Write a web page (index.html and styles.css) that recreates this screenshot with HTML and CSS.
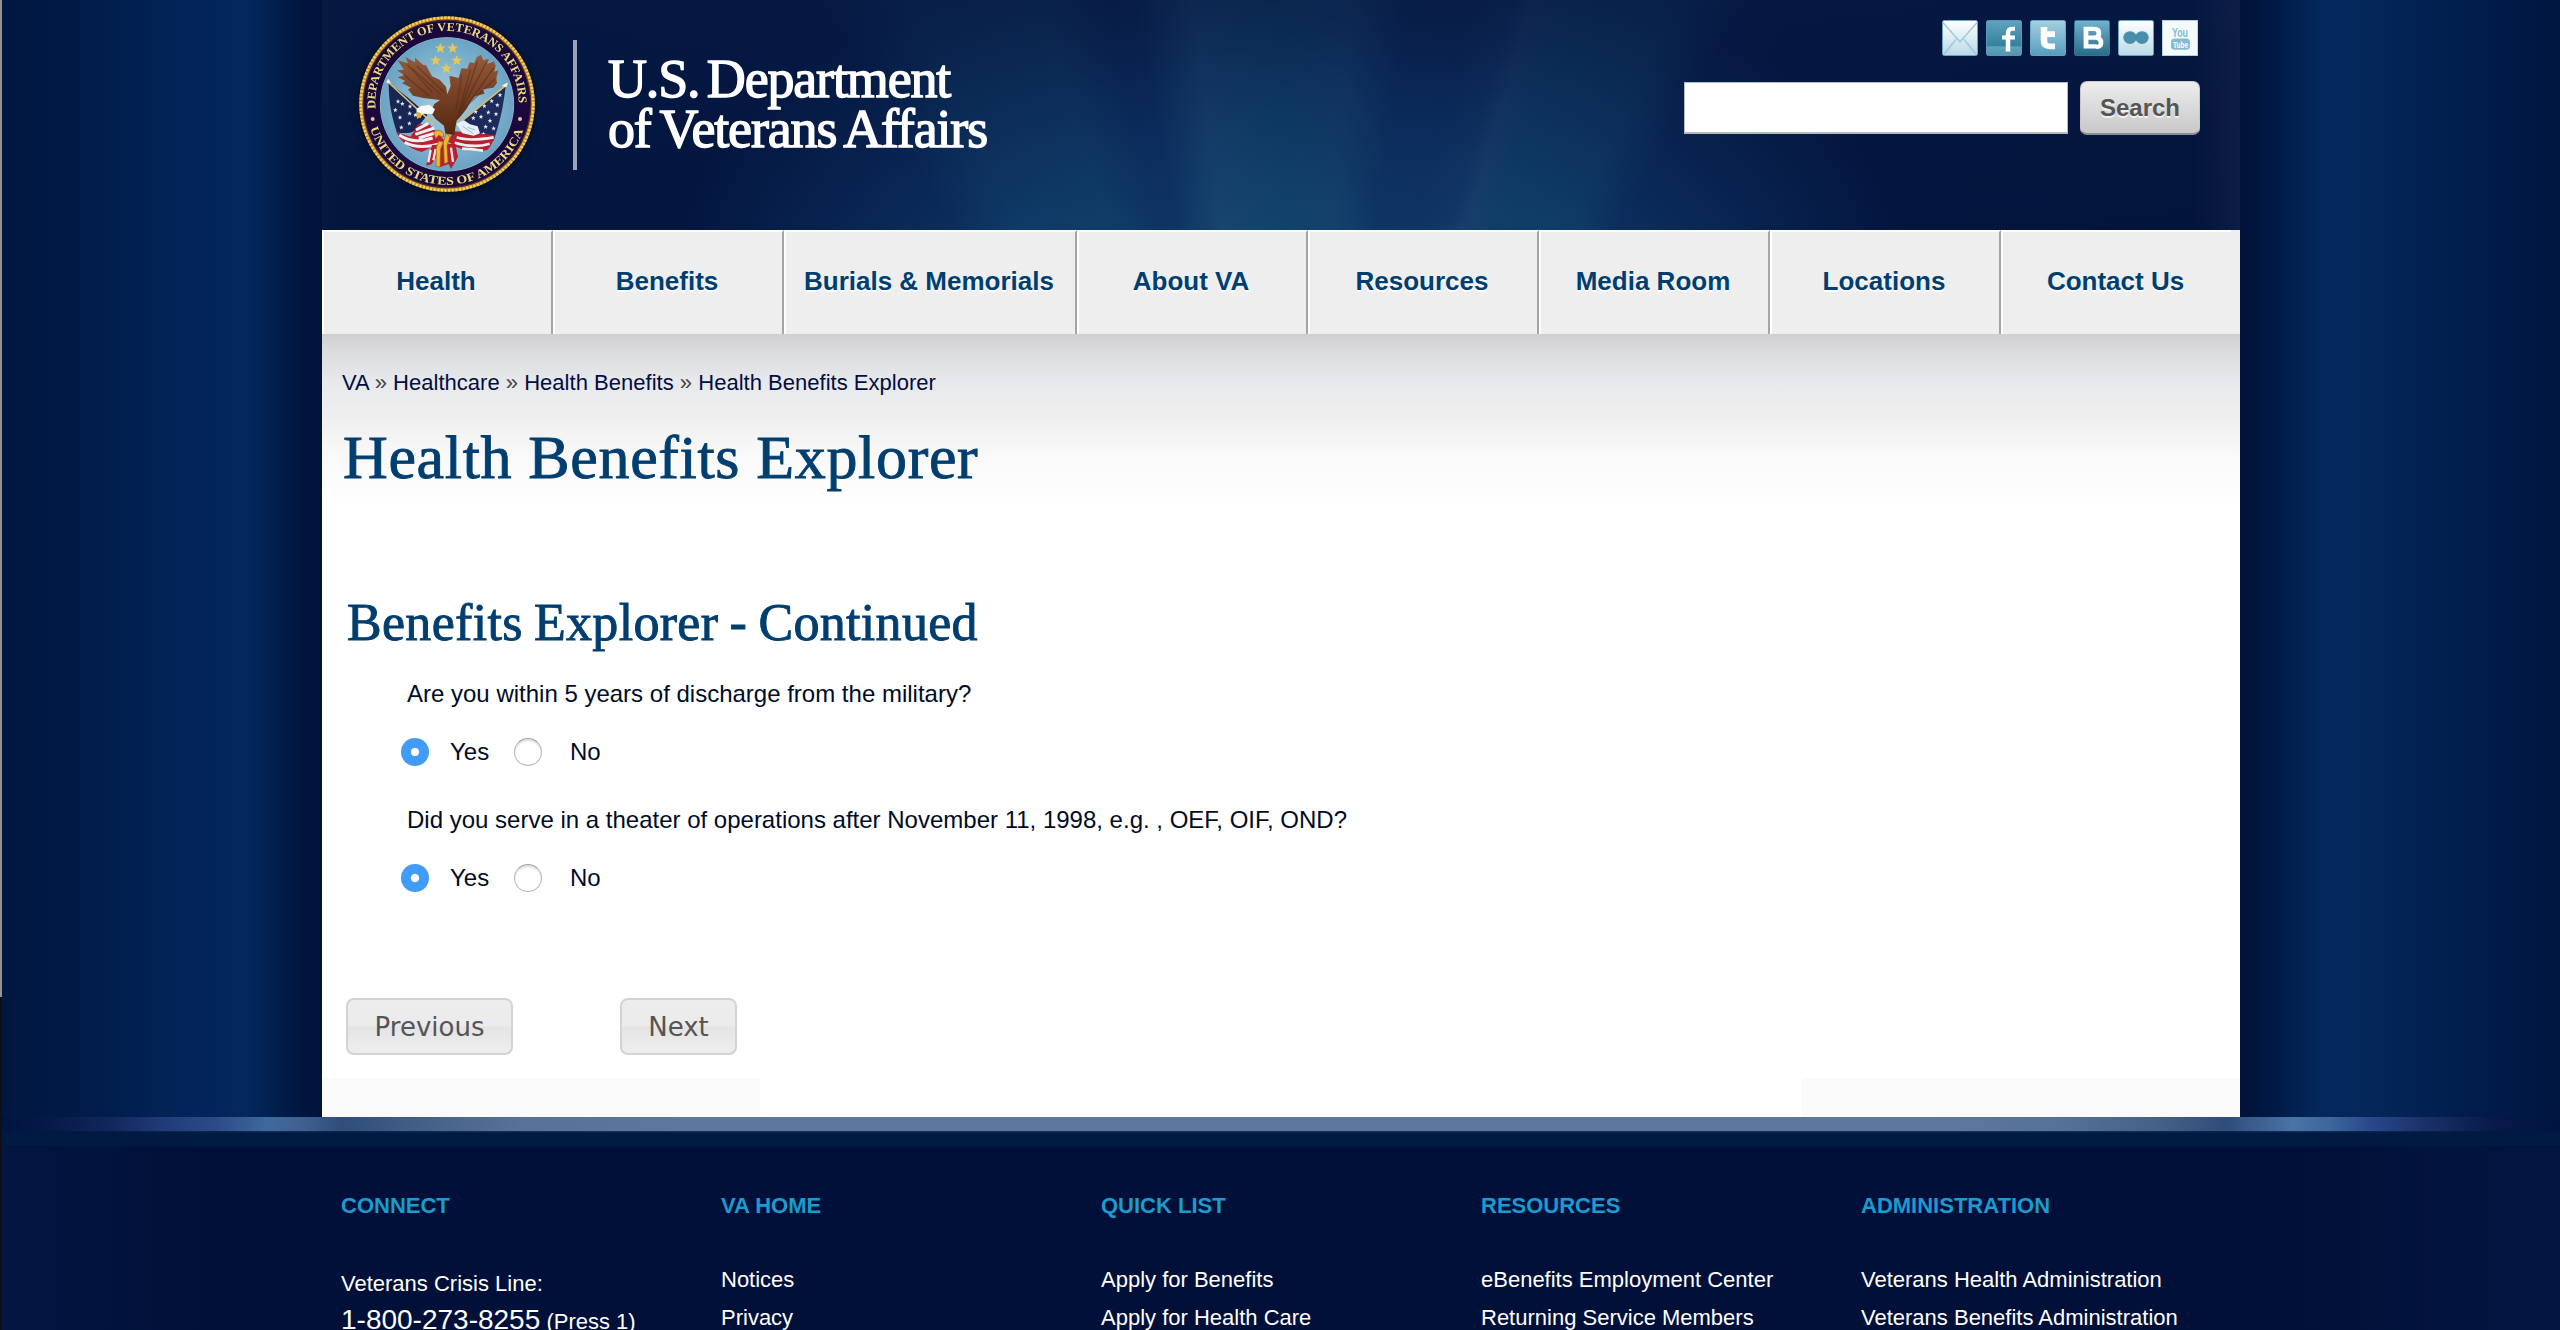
FILE: index.html
```html
<!DOCTYPE html>
<html lang="en">
<head>
<meta charset="utf-8">
<title>Health Benefits Explorer</title>
<link rel="stylesheet" href="styles.css">
</head>
<body>
<div class="stage">
<div class="page">
  <header class="banner">
    <svg class="seal" viewBox="0 0 660 660" aria-label="Department of Veterans Affairs seal">
      <defs>
        <path id="arc-top" d="M107 328 A215 215 0 1 1 535 328"/>
        <path id="arc-bottom" d="M88 375 A241 241 0 0 0 554 375"/>
        <radialGradient id="sky"><stop offset="0" stop-color="#a9cfe0"/><stop offset="1" stop-color="#6ba3c4"/></radialGradient>
        <linearGradient id="feather" x1="0" y1="0" x2="0" y2="1"><stop offset="0" stop-color="#965b3b"/><stop offset="1" stop-color="#56260f"/></linearGradient>
        <path id="star" d="M0-17 4.5-5.5 16.5-5.5 7 2 10.5 14 0 7-10.5 14-7 2-16.5-5.5-4.5-5.5Z"/>
        <path id="starlet" d="M0-7 2-2 7-2 3 1 4 7 0 3-4 7-3 1-7-2-2-2Z" fill="#e5edf8"/>
      </defs>
      <circle cx="321" cy="312" r="258" fill="#1b093d" stroke="#c28826" stroke-width="11"/>
      <circle cx="321" cy="312" r="259" fill="none" stroke="#f2d264" stroke-width="8" stroke-dasharray="7 4"/>
      <circle cx="321" cy="312" r="251" fill="none" stroke="#70401b" stroke-width="2"/>
      <circle cx="321" cy="313" r="200" fill="url(#sky)" stroke="#86b5cd" stroke-width="3"/>
      <text class="seal-text"><textPath href="#arc-top" startOffset="2" textLength="696" lengthAdjust="spacingAndGlyphs">DEPARTMENT OF VETERANS AFFAIRS</textPath></text>
      <text class="seal-text"><textPath href="#arc-bottom" startOffset="10" textLength="606" lengthAdjust="spacingAndGlyphs">UNITED STATES OF AMERICA</textPath></text>
      <circle cx="98" cy="357" r="6" fill="#e3c49a"/><circle cx="540" cy="357" r="6" fill="#e3c49a"/>
      <g fill="#e6c757">
        <use href="#star" x="301" y="145"/><use href="#star" x="338" y="145"/><use href="#star" x="287" y="182"/><use href="#star" x="350" y="182"/><use href="#star" x="319" y="206"/>
      </g>
      <path d="M146 250C146 315 158 360 171 398C196 398 214 404 229 386L262 345Q205 290 146 250Z" fill="#192654"/>
      <path d="M497 258C490 320 480 365 461 422L365 392L370 358Z" fill="#1e2a5c"/>
      <g>
        <use href="#starlet" x="174" y="304"/><use href="#starlet" x="166" y="330"/><use href="#starlet" x="187" y="311"/><use href="#starlet" x="210" y="319"/><use href="#starlet" x="209" y="340"/><use href="#starlet" x="180" y="352"/><use href="#starlet" x="208" y="370"/><use href="#starlet" x="184" y="382"/><use href="#starlet" x="226" y="345"/>
        <use href="#starlet" x="480" y="285"/><use href="#starlet" x="455" y="303"/><use href="#starlet" x="472" y="315"/><use href="#starlet" x="433" y="318"/><use href="#starlet" x="445" y="337"/><use href="#starlet" x="468" y="342"/><use href="#starlet" x="407" y="335"/><use href="#starlet" x="423" y="350"/><use href="#starlet" x="450" y="362"/><use href="#starlet" x="400" y="354"/><use href="#starlet" x="437" y="380"/><use href="#starlet" x="461" y="385"/><use href="#starlet" x="430" y="402"/>
      </g>
      <path d="M169 397C180 421 205 446 245 456L315 423L268 373L234 373Q222 396 211 410Z" fill="#bb2030"/>
      <path d="M178 405Q218 434 278 414M194 427Q237 450 303 430M228 390L265 370M226 403L283 384M236 414L296 396" fill="none" stroke="#f4edf0" stroke-width="9"/>
      <path d="M344 394L465 405Q459 432 442 450Q399 460 351 442L322 423Z" fill="#b81f2f"/>
      <path d="M350 412Q386 425 461 412M344 428Q401 446 449 431M366 446Q397 447 429 452" fill="none" stroke="#f4edf0" stroke-width="8"/>
      <path d="M276 435L258 497L275 493L289 471L299 502L326 492L333 507L354 471L346 431Z" fill="#b81f2f"/>
      <path d="M272 450L265 487M287 447L280 481M333 443L339 486" stroke="#f2e7ed" stroke-width="7"/>
      <path d="M144 246L279 371M497 257L353 373" fill="none" stroke="#d9bd64" stroke-width="5"/>
      <path d="M140 247L145 238L151 249ZM499 260L502 249L487 257Z" fill="#fff" stroke="#f7e8c4" stroke-width="3"/>
      <path d="M173 181L204 190 196 171 225 187 225 173 250 195 258 196 276 229 299 239 318 260 322 283 332 258 328 227 356 234 364 205 382 206 389 187 403 189 410 172 423 164 430 181 447 176 442 192 462 184 467 199 462 215 475 211 469 235 471 249 460 263 428 268 434 281 405 289 391 306 380 326 363 348 350 362 346 384 343 405 316 401 312 377 286 356 272 337 283 312 300 300 250 294 219 287 204 268 213 263 186 249 196 243 173 232 193 226 171 211 192 209Z" fill="url(#feather)"/>
      <path d="M202 193L278 278M216 205L301 283M190 223L267 287M230 198L314 278M365 224L348 333M392 208L355 340M412 185L355 352M439 187L351 355M461 204L362 344M464 238L374 324" fill="none" stroke="#4e2413" stroke-width="4" opacity=".45"/>
      <path d="M229 347L230 326 244 318 269 314 285 328 278 342 248 341 241 354Z" fill="#f8f8fb"/>
      <path d="M230 334L245 342 243 351 231 357Z" fill="#e3ad27"/>
      <path d="M349 371L372 361 390 373 413 379 420 400 401 407 367 400Z" fill="#e7eff8"/>
      <path d="M383 382L405 390M368 379L400 401" stroke="#9fb9d2" stroke-width="3"/>
      <path d="M281 397Q300 383 311 401L310 411 296 406 287 416ZM297 423L289 441 288 499 300 501 302 447 310 426ZM310 426L313 491 324 487 321 437 330 412 319 400Z" fill="#edb631" stroke="#945d17" stroke-width="2"/>
    </svg>
    <div class="wordmark"><span class="first">U.S. Department</span><span class="second">of Veterans Affairs</span></div>
    <div class="tools">
      <div class="social">
        <svg viewBox="0 0 36 36"><use href="#icon-mail"/></svg>
        <svg viewBox="0 0 36 36"><use href="#icon-facebook"/></svg>
        <svg viewBox="0 0 36 36"><use href="#icon-twitter"/></svg>
        <svg viewBox="0 0 36 36"><use href="#icon-blog"/></svg>
        <svg viewBox="0 0 36 36"><use href="#icon-flickr"/></svg>
        <svg viewBox="0 0 36 36"><use href="#icon-youtube"/></svg>
      </div>
      <form class="search"><input type="text" aria-label="Search"><button type="button">Search</button></form>
    </div>
  </header>
  <nav class="menu">
    <a>Health</a><a>Benefits</a><a class="wide">Burials &amp; Memorials</a><a>About VA</a><a>Resources</a><a>Media Room</a><a>Locations</a><a>Contact Us</a>
  </nav>
  <main class="content">
    <p class="crumbs"><a>VA</a> » <a>Healthcare</a> » <a>Health Benefits</a> » <a>Health Benefits Explorer</a></p>
    <h1>Health Benefits Explorer</h1>
    <h2>Benefits Explorer - Continued</h2>
    <section class="question">
      <p>Are you within 5 years of discharge from the military?</p>
      <div class="answers"><i class="radio on"></i><span class="yes">Yes</span><i class="radio"></i><span>No</span></div>
    </section>
    <section class="question">
      <p>Did you serve in a theater of operations after November 11, 1998, e.g. , OEF, OIF, OND?</p>
      <div class="answers"><i class="radio on"></i><span class="yes">Yes</span><i class="radio"></i><span>No</span></div>
    </section>
    <div class="actions"><button type="button">Previous</button><button type="button">Next</button></div>
    <div class="base"></div>
  </main>
</div>
<footer class="footer">
  <div class="rule"></div>
  <div class="columns">
    <div><h3>CONNECT</h3><p class="crisis">Veterans Crisis Line:<br><b>1-800-273-8255</b> (Press 1)</p></div>
    <div><h3>VA HOME</h3><ul><li>Notices</li><li>Privacy</li></ul></div>
    <div><h3>QUICK LIST</h3><ul><li>Apply for Benefits</li><li>Apply for Health Care</li></ul></div>
    <div><h3>RESOURCES</h3><ul><li>eBenefits Employment Center</li><li>Returning Service Members</li></ul></div>
    <div><h3>ADMINISTRATION</h3><ul><li>Veterans Health Administration</li><li>Veterans Benefits Administration</li></ul></div>
  </div>
</footer>
</div>
<svg class="sprite" width="0" height="0">
  <defs>
    <linearGradient id="pale" x1="0" y1="0" x2="0" y2="1"><stop offset="0" stop-color="#fff"/><stop offset="1" stop-color="#b9d9e6"/></linearGradient>
    <linearGradient id="teal" x1="0" y1="0" x2="0" y2="1"><stop offset="0" stop-color="#5fa4c0"/><stop offset=".72" stop-color="#357f9f"/><stop offset=".75" stop-color="#5fa3bd"/><stop offset="1" stop-color="#4f94b2"/></linearGradient>
    <linearGradient id="aqua" x1="0" y1="0" x2="0" y2="1"><stop offset="0" stop-color="#a5d0e0"/><stop offset="1" stop-color="#559dbe"/></linearGradient>
    <linearGradient id="deep" x1="0" y1="0" x2="0" y2="1"><stop offset="0" stop-color="#72b3cf"/><stop offset="1" stop-color="#276c88"/></linearGradient>
  </defs>
  <symbol id="icon-mail" viewBox="0 0 36 41" preserveAspectRatio="none"><rect x=".5" y=".5" width="35" height="40" rx="2" fill="url(#pale)" stroke="#6ba7bf"/><path d="M1 3 18 25 35 3M2 39 14 22M34 39 22 22" fill="none" stroke="#9fcadb" stroke-width="1.6"/></symbol>
  <symbol id="icon-facebook" viewBox="0 0 36 41" preserveAspectRatio="none"><rect x=".5" y=".5" width="35" height="40" rx="2" fill="url(#teal)" stroke="#5c9cb7"/><path d="M29 10H26Q22 10 22 16V36M16 20H29" fill="none" stroke="#fff" stroke-width="4.5"/></symbol>
  <symbol id="icon-twitter" viewBox="0 0 36 41" preserveAspectRatio="none"><rect x=".5" y=".5" width="35" height="40" rx="2" fill="url(#aqua)" stroke="#70abc4"/><path d="M14 8V24Q14 30 20 30H25M12 16H25" fill="none" stroke="#fff" stroke-width="6.5" stroke-linejoin="round"/></symbol>
  <symbol id="icon-blog" viewBox="0 0 36 41" preserveAspectRatio="none"><rect x=".5" y=".5" width="35" height="40" rx="2" fill="url(#deep)" stroke="#397b95"/><path d="M12 10H20Q25 10 25 15T20 20H12ZM12 20H21Q27 20 27 26T21 30H12Z" fill="none" stroke="#fff" stroke-width="4.8"/></symbol>
  <symbol id="icon-flickr" viewBox="0 0 36 41" preserveAspectRatio="none"><rect x=".5" y=".5" width="35" height="40" rx="2" fill="url(#pale)" stroke="#6ba7bf"/><rect x="12" y="17" width="12" height="6" fill="#4a8eac"/><ellipse cx="12" cy="20" rx="6.7" ry="7.2" fill="#4a8eac"/><ellipse cx="24" cy="20" rx="6.7" ry="7.2" fill="#4a8eac"/></symbol>
  <symbol id="icon-youtube" viewBox="0 0 36 41" preserveAspectRatio="none"><rect x=".5" y=".5" width="35" height="40" fill="#f3fafc" stroke="#b8d4df"/><text class="yt" x="10" y="19" textLength="16" lengthAdjust="spacingAndGlyphs" fill="#86bacf">You</text><rect x="9" y="21" width="19" height="13" rx="4" fill="#86bacf"/><text class="yt small" x="11" y="32" textLength="15" lengthAdjust="spacingAndGlyphs" fill="#fff">Tube</text></symbol>
</svg>
</body>
</html>
```
FILE: styles.css
```css
* { box-sizing: border-box; }
body { margin: 0; font-family: "Liberation Sans", Arial, sans-serif; color: #000b26; background: #001038; overflow: hidden; }
h1, h2, h3, p, ul { margin: 0; padding: 0; font-weight: normal; }
ul { list-style: none; }
.sprite { position: absolute; }
.stage {
  height: 1330px; overflow: hidden; border-left: 2px solid #15151b;
  border-image: linear-gradient(#98958f 0 997px, #101014 997px) 0 0 0 2;
  background: linear-gradient(90deg, #001740 0, #001b48 80px, #022458 180px, #04285c 246px, #001c49 280px, #001238 318px, #001238 2238px, #001b48 2278px, #04285c 2318px, #04275a 2360px, #001c4b 2470px, #001641 100%);
}
.page { width: 1918px; margin-left: 320px; }
.banner {
  height: 230px; display: flex; padding-left: 18px;
  background:
    linear-gradient(90deg, #071a4080 0, transparent 40px, transparent 1870px, #0d1d46 100%),
    linear-gradient(#071a44a0 0, #071a4450 90px, transparent 230px),
    conic-gradient(from -40deg at 971px 820px, transparent 0 10deg, #15507244 15deg, #15507255 23deg, transparent 27deg 29deg, #1f547a88 33deg, #12507288 39deg, #1b4f7677 44deg, transparent 48deg 52deg, #1b457044 55deg, #27507a66 56.3deg, #114c6f77 58.5deg, #14507255 65deg, transparent 69deg),
    radial-gradient(ellipse 620px 330px at 971px 270px, #0f3766 0, #0d3263 45%, transparent 100%),
    linear-gradient(90deg, #02153b 0, #031640 400px, #081c48 1000px, #03153f 1500px, #03143a 100%);
}
.seal { width: 220px; height: 220px; flex: none; filter: drop-shadow(0 1px 4px #0008); }
.seal-text { font: bold 36px "Liberation Serif", serif; fill: #eadc82; }
.wordmark {
  margin: 40px 0 0 13px; height: 130px; padding: 14px 0 0 31px; border-left: 4px solid #9ca2b5;
  color: #fff; font: 54px/50px "Liberation Serif", serif; white-space: nowrap;
  -webkit-text-stroke: 1.4px #fff;
}
.wordmark span { display: block; }
.first { letter-spacing: -1.15px; word-spacing: -5px; }
.second { letter-spacing: -1.15px; word-spacing: -2.5px; }
.tools { margin: 20px 40px 0 auto; display: flex; flex-direction: column; }
.social { display: flex; justify-content: flex-end; gap: 8px; padding-right: 2px; }
.social svg { width: 36px; height: 36px; display: block; }
.yt { font: bold 14px "Liberation Sans", sans-serif; }
.yt.small { font-size: 10px; }
.search { display: flex; margin-top: 25px; }
.search input { width: 384px; height: 52px; margin: 1px 12px 0 0; border: 1px solid #b5b8bf; border-bottom-width: 2px; background: #fff; }
.search button {
  width: 120px; height: 54px; border: 1px solid #c8c8c8; border-bottom: 2px solid #8e8e8e; border-radius: 7px;
  background: linear-gradient(#ececec, #c8c8c8); color: #555; font: bold 24px "Liberation Sans", sans-serif;
  padding: 0; text-shadow: 0 2px 0 #f0f0f0;
}
.menu { height: 104px; display: flex; background: #eee; }
.menu a {
  width: 231px; text-align: center; font-weight: bold; font-size: 26px; line-height: 98px; color: #003e70; padding-right: 3px;
  text-shadow: 0 2px 0 #fff; border-right: 2px solid #a5a5a5; border-left: 2px solid #fff; border-top: 2px solid #fff;
}
.menu .wide { width: 293px; }
.menu a:last-child { width: 230px; border-right: 0; }
.content { height: 783px; background: linear-gradient(#cfcfd0 0, #dbdcde 18px, #e7e8eb 46px, #efeff0 84px, #f8f8f9 118px, #fff 170px); }
.crumbs { padding: 37px 0 0 20px; font-size: 22px; line-height: 24px; letter-spacing: .02px; color: #444; }
.crumbs a { color: #000e40; }
h1, h2 { font-family: "Liberation Serif", serif; color: #003e70; -webkit-text-stroke: .9px #003e70; white-space: nowrap; }
h1 { margin: 26px 0 0 21px; font-size: 62px; line-height: 72px; letter-spacing: .65px; }
h2 { margin: 100px 0 0 25px; font-size: 52px; line-height: 60px; letter-spacing: .3px; word-spacing: -2px; }
.question { padding-left: 79px; height: 126px; padding-top: 27px; }
.question p { padding-left: 6px; font-size: 24px; line-height: 28px; }
.answers { display: flex; align-items: center; height: 28px; margin-top: 30px; font-size: 24px; line-height: 28px; }
.radio { width: 28px; height: 28px; border-radius: 50%; border: 1.5px solid #b9b9b9; border-top-color: #a3a3a3; background: #fff; box-shadow: inset 0 2px 2px #ddd; margin-right: 28px; }
.radio.on { border: 0; box-shadow: none; margin-right: 21px; background: radial-gradient(circle, #fff 0 3.6px, #419bf9 4.6px); }
.yes { width: 64px; }
.actions { display: flex; gap: 107px; padding-left: 24px; margin-top: 93px; }
.actions button {
  height: 57px; padding: 0; width: 167px; border: 2px solid #d3d3d3; border-radius: 8px; color: #555;
  background: linear-gradient(#ededed 0, #ebebeb 48%, #e4e4e4 52%, #eee 100%); font: 26px "DejaVu Sans", sans-serif;
}
.actions button + button { width: 117px; }
.base { height: 40px; margin-top: 23px; background: linear-gradient(90deg, #fafafa 438px, #fff 438px 1480px, #fafafa 1480px); }
.footer { height: 213px; background: linear-gradient(90deg, #031541, #001038 200px 2300px, #031541); }
.rule {
  height: 30px;
  background:
    linear-gradient(#0000 14px, #001a40b0 14px, #001a42 16px, #001a42 29px, #001038 30px),
    linear-gradient(90deg, #001440 0, #08194a 50px, #13275c 110px, #203b79 160px, #2d4987 212px, #3e699d 265px, #41608f 300px, #304d7b 340px, #456389 430px, #577295 520px, #5e789d 700px, #5e789d 1940px, #537295 2060px, #456288 2150px, #304d7b 2225px, #4a73a6 2290px, #3e689c 2325px, #29478a 2370px, #1b3269 2420px, #09194a 2490px, #001440 100%);
}
.columns { display: grid; grid-template-columns: repeat(5, 380px); padding: 46px 0 0 339px; color: #fff; font-size: 22px; }
.columns h3 { font-size: 22px; font-weight: bold; line-height: 26px; color: #1b9bce; height: 68px; }
.columns li { line-height: 38px; white-space: nowrap; }
.crisis { line-height: 38px; padding-top: 4px; white-space: nowrap; }
.crisis b { font-size: 28px; font-weight: normal; line-height: 1; }
```
